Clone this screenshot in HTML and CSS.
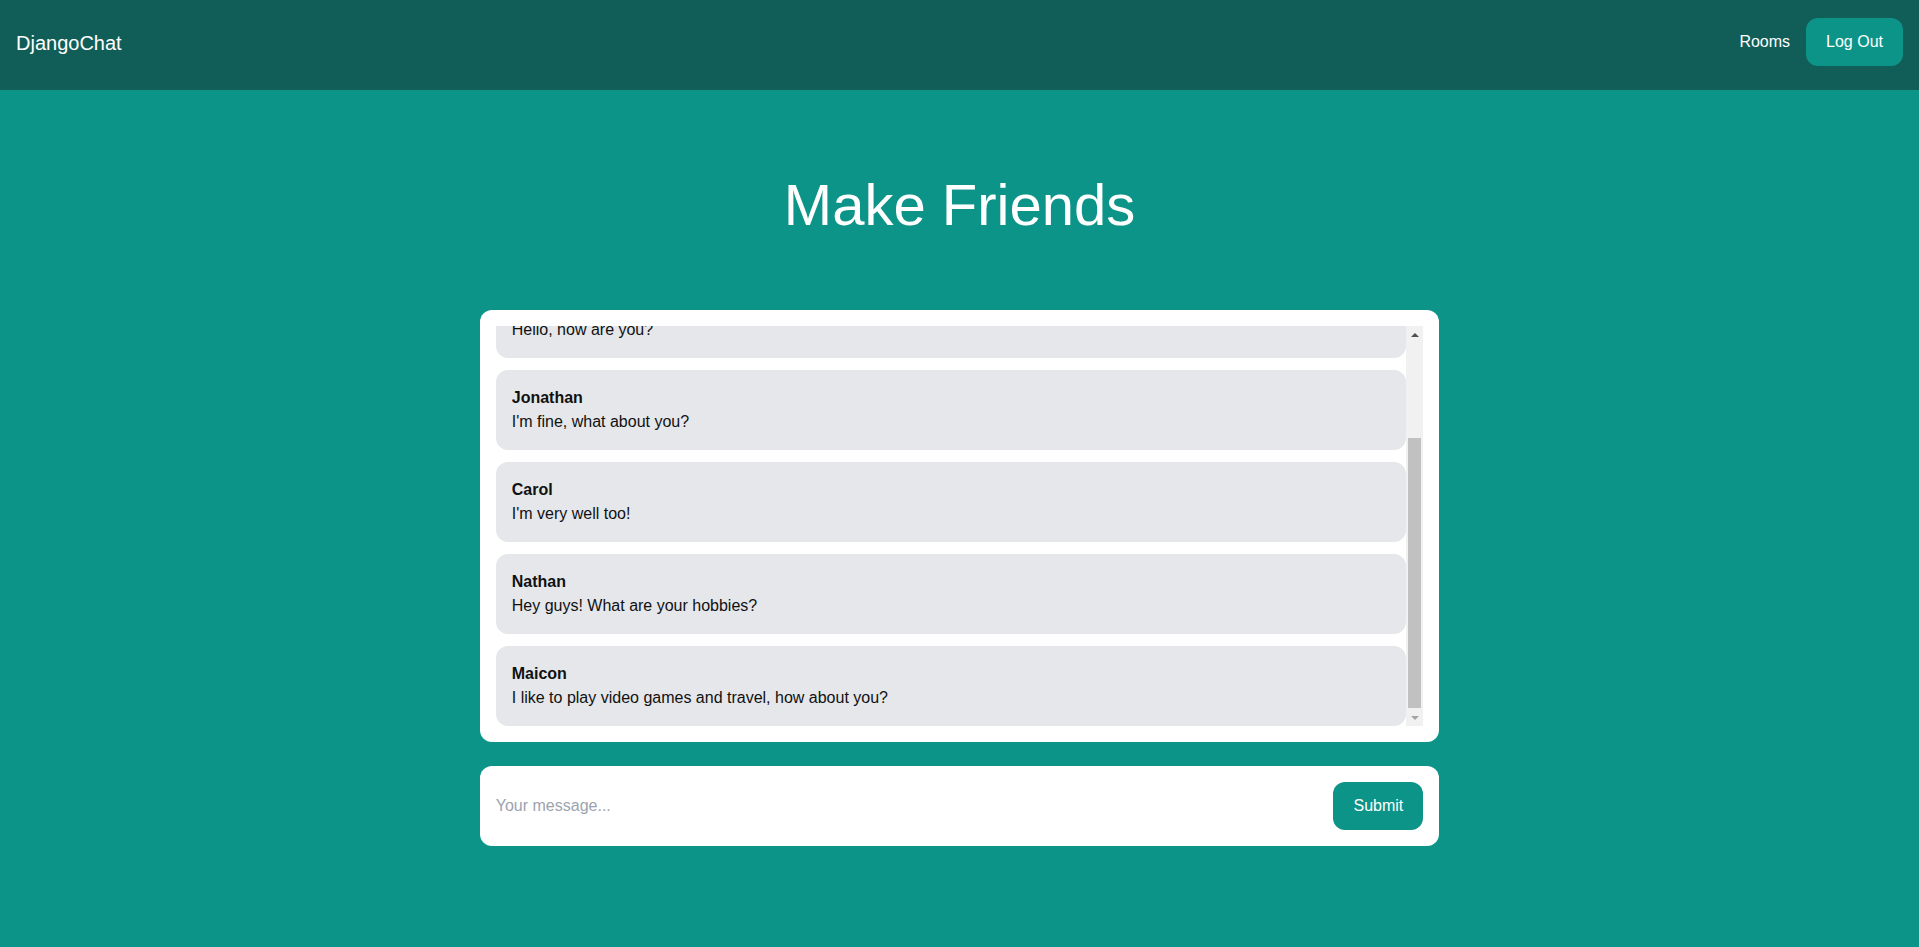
FILE: index.html
```html
<!DOCTYPE html>
<html lang="en">
<head>
<meta charset="utf-8">
<title>DjangoChat</title>
<link rel="stylesheet" href="styles.css">
</head>
<body>
<nav class="nav">
  <a class="brand" href="#">DjangoChat</a>
  <div class="nav-links">
    <a class="nav-link" href="#">Rooms</a>
    <a class="btn" href="#">Log Out</a>
  </div>
</nav>

<header class="hero">
  <h1 class="title">Make Friends</h1>
</header>

<main class="chat-wrap">
  <section class="chat-card">
    <div class="chat-body">
      <div class="scroll">
        <div class="messages">
          <div class="msg">
            <p class="msg-name">Carol</p>
            <p class="msg-text">Hi everyone!</p>
          </div>
          <div class="msg">
            <p class="msg-name">Maicon</p>
            <p class="msg-text">Hello, how are you?</p>
          </div>
          <div class="msg">
            <p class="msg-name">Jonathan</p>
            <p class="msg-text">I'm fine, what about you?</p>
          </div>
          <div class="msg">
            <p class="msg-name">Carol</p>
            <p class="msg-text">I'm very well too!</p>
          </div>
          <div class="msg">
            <p class="msg-name">Nathan</p>
            <p class="msg-text">Hey guys! What are your hobbies?</p>
          </div>
          <div class="msg">
            <p class="msg-name">Maicon</p>
            <p class="msg-text">I like to play video games and travel, how about you?</p>
          </div>
        </div>
      </div>
      <div class="scrollbar" aria-hidden="true">
        <div class="sb-btn sb-up"><span class="tri tri-up"></span></div>
        <div class="sb-track"><div class="sb-thumb"></div></div>
        <div class="sb-btn sb-down"><span class="tri tri-down"></span></div>
      </div>
    </div>
  </section>

  <form class="form-card">
    <input class="input" type="text" placeholder="Your message...">
    <button class="btn submit" type="button">Submit</button>
  </form>
</main>
</body>
</html>
```

FILE: styles.css
```css
* { box-sizing: border-box; }

html, body {
  margin: 0;
  padding: 0;
}

body {
  background: #0d9488;
  font-family: "Liberation Sans", Arial, sans-serif;
  font-size: 16px;
  line-height: 24px;
  color: #111;
  min-height: 100vh;
}

a { text-decoration: none; color: inherit; }

.nav {
  background: #115e59;
  display: flex;
  justify-content: space-between;
  align-items: center;
  padding: 18px 16px 24px 16px;
  height: 90px;
}

.brand {
  color: #fff;
  font-size: 20px;
  line-height: 28px;
  margin-top: 2px;
}

.nav-links {
  display: flex;
  align-items: center;
  gap: 16px;
}

.nav-link {
  color: #fff;
}

.btn {
  display: inline-block;
  background: #0d9488;
  color: #fff;
  padding: 12px 20px;
  border-radius: 12px;
  border: none;
  font: inherit;
  line-height: 24px;
  cursor: pointer;
}

.hero {
  padding: 85px 0 75px 0;
  text-align: center;
}

.title {
  margin: 0;
  color: #fff;
  font-size: 58px;
  line-height: 60px;
  font-weight: 400;
}

.chat-wrap {
  width: 50%;
  margin: 0 auto;
}

.chat-card {
  background: #fff;
  border-radius: 12px;
  padding: 16px;
}

.chat-body {
  display: flex;
  height: 400px;
}

.scroll {
  flex: 1;
  min-width: 0;
  overflow: hidden;
  display: flex;
  flex-direction: column-reverse;
}

.scrollbar {
  width: 17px;
  flex: none;
  background: #f1f1f1;
  display: flex;
  flex-direction: column;
}

.sb-btn {
  height: 17px;
  flex: none;
  display: flex;
  align-items: center;
  justify-content: center;
}

.sb-track {
  flex: 1;
  display: flex;
  flex-direction: column;
  justify-content: flex-end;
  padding: 0 2px 1px 2px;
}

.sb-thumb {
  height: 270px;
  background: #c1c1c1;
}

.tri {
  width: 0;
  height: 0;
  border-left: 4px solid transparent;
  border-right: 4px solid transparent;
}

.tri-up {
  border-bottom: 4px solid #505050;
}

.tri-down {
  border-top: 4px solid #a3a3a3;
}

.messages {
  display: flex;
  flex-direction: column;
  gap: 12px;
}

.msg {
  background: #e5e7eb;
  border-radius: 12px;
  padding: 16px;
}

.msg-name {
  margin: 0;
  font-weight: 700;
  font-size: 16px;
}

.msg-text {
  margin: 0;
  font-size: 16px;
}

.form-card {
  margin: 24px 0 0 0;
  background: #fff;
  border-radius: 12px;
  padding: 16px;
  display: flex;
  align-items: center;
  gap: 12px;
}

.input {
  flex: 1;
  border: none;
  outline: none;
  font: inherit;
  color: #111;
  padding: 0;
  background: transparent;
}

.input::placeholder {
  color: #9ca3af;
}
```
